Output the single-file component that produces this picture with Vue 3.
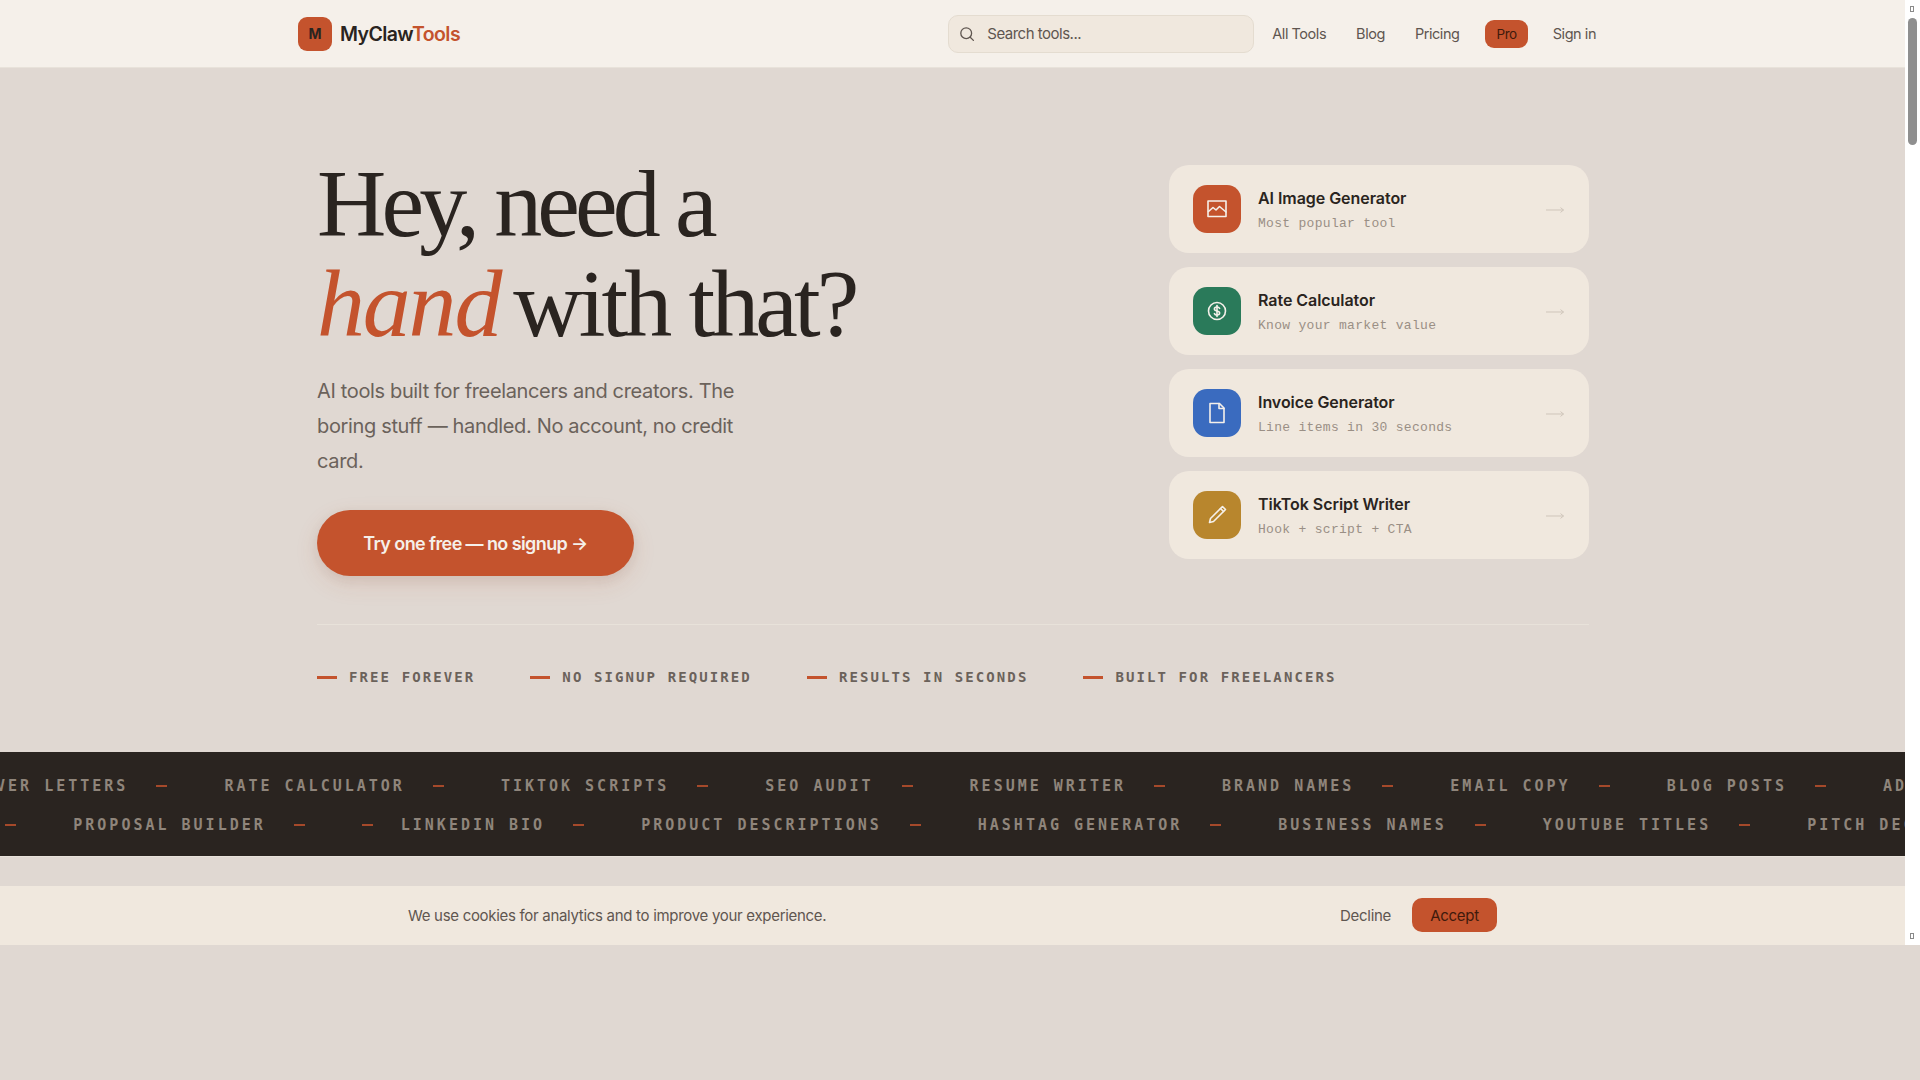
<template>
  <div class="page">
    <div class="viewport">
      <div class="content">
        <header class="topbar">
          <a class="logo">
            <span class="logo-mark">M</span>
            <span class="logo-text">MyClaw<em>Tools</em></span>
          </a>
          <div class="search">
            <svg width="16" height="16" viewBox="0 0 16 16" fill="none" stroke="#5f5650" stroke-width="1.3" stroke-linecap="round">
              <circle cx="7.2" cy="7.2" r="5.4" />
              <path d="M11.2 11.2 14.4 14.4" />
            </svg>
            <span>Search tools...</span>
          </div>
          <nav class="nav">
            <a>All Tools</a>
            <a>Blog</a>
            <a>Pricing</a>
            <a class="pro">Pro</a>
            <a>Sign in</a>
          </nav>
        </header>

        <main class="main">
          <section class="hero">
            <div class="hero-left">
              <h1>Hey, need a<br /><em>hand</em> <span>with that?</span></h1>
              <p>AI tools built for freelancers and creators. The boring stuff — handled. No account, no credit card.</p>
              <button class="cta">Try one free — no signup →</button>
            </div>
            <div class="tool-list">
              <div v-for="tool in tools" :key="tool.name" class="tool-card">
                <span class="tool-icon" :style="{ background: tool.color }">
                  <svg width="24" height="24" viewBox="0 0 24 24" fill="none" stroke="#f5f0ea" stroke-width="1.6" stroke-linecap="round" stroke-linejoin="round">
                    <path v-for="d in tool.paths" :key="d" :d="d" />
                  </svg>
                </span>
                <span class="tool-text">
                  <span class="tool-name">{{ tool.name }}</span>
                  <span class="tool-sub">{{ tool.sub }}</span>
                </span>
                <svg class="tool-arrow" width="20" height="10" viewBox="0 0 20 10" fill="none" stroke="#cfc5ba" stroke-width="1">
                  <path d="M1 5H18.5M15.5 2.6 18.5 5 15.5 7.4" />
                </svg>
              </div>
            </div>
          </section>

          <div class="perks">
            <span v-for="perk in perks" :key="perk" class="perk"><i></i>{{ perk }}</span>
          </div>
        </main>

        <section class="ticker">
          <div class="ticker-row row-a">
            <span v-for="(item, i) in rowA" :key="i" class="ticker-item">
              <span>{{ item }}</span><i></i>
            </span>
          </div>
          <div class="ticker-row row-b">
            <span v-for="(item, i) in rowB" :key="i" class="ticker-item" :class="{ bare: !item }">
              <span v-if="item">{{ item }}</span><i></i>
            </span>
          </div>
        </section>

        <div class="cookie">
          <span class="cookie-text">We use cookies for analytics and to improve your experience.</span>
          <div class="cookie-actions">
            <a>Decline</a>
            <button>Accept</button>
          </div>
        </div>
      </div>

      <!-- scrollbar of the captured window -->
      <div class="scrollbar">
        <span class="sb-end"></span>
        <span class="sb-thumb"></span>
        <span class="sb-end bottom"></span>
      </div>
    </div>
  </div>
</template>

<script setup>
const tools = [
  {
    name: 'AI Image Generator',
    sub: 'Most popular tool',
    color: '#c4532d',
    paths: ['M3 4h18v15.5H3z', 'M3.5 14.5 8 10.5l3 2.5 3.5-3.5 6.5 5.5']
  },
  {
    name: 'Rate Calculator',
    sub: 'Know your market value',
    color: '#2a7a5a',
    paths: ['M12 3.5a8.5 8.5 0 1 0 0 17 8.5 8.5 0 0 0 0-17z', 'M14.6 9.4c-.5-1-1.5-1.4-2.6-1.4-1.5 0-2.6.8-2.6 2s1.1 1.7 2.6 2 2.6.8 2.6 2-1.1 2-2.6 2c-1.1 0-2.1-.4-2.6-1.4', 'M12 6.5v11']
  },
  {
    name: 'Invoice Generator',
    sub: 'Line items in 30 seconds',
    color: '#3a6bbf',
    paths: ['M5 2.5h9.5L19 7v14.5H5z', 'M14 2.5V7.5h5']
  },
  {
    name: 'TikTok Script Writer',
    sub: 'Hook + script + CTA',
    color: '#b8862d',
    paths: ['M17.5 3.5l3 3L8.5 18.5 4.5 19.5l1-4z', 'M15.5 5.5l3 3']
  }
]

const perks = ['FREE FOREVER', 'NO SIGNUP REQUIRED', 'RESULTS IN SECONDS', 'BUILT FOR FREELANCERS']

const rowA = ['COVER LETTERS', 'RATE CALCULATOR', 'TIKTOK SCRIPTS', 'SEO AUDIT', 'RESUME WRITER', 'BRAND NAMES', 'EMAIL COPY', 'BLOG POSTS', 'AD COPY']
const rowB = ['CONTRACTS', 'PROPOSAL BUILDER', '', 'LINKEDIN BIO', 'PRODUCT DESCRIPTIONS', 'HASHTAG GENERATOR', 'BUSINESS NAMES', 'YOUTUBE TITLES', 'PITCH DECKS']
</script>

<style>
html,
body {
  margin: 0;
  background: #e0d8d2;
}
</style>

<style scoped>
.page {
  width: 1920px;
  height: 1080px;
  overflow: hidden;
  background: #e0d8d2;
  color: #2a2420;
  font-family: Inter, "Noto Sans", sans-serif;
}

.viewport {
  display: flex;
  height: 945px;
}

.content {
  position: relative;
  flex: 1;
  min-width: 0;
  overflow: hidden;
}

.topbar {
  display: flex;
  align-items: center;
  height: 68px;
  box-sizing: border-box;
  padding: 0 309px 0 298px;
  background: #f5f0ea;
  border-bottom: 1px solid #e8e2da;
}

.logo {
  display: flex;
  align-items: center;
  gap: 8px;
}

.logo-mark {
  display: flex;
  align-items: center;
  justify-content: center;
  width: 34px;
  height: 34px;
  border-radius: 9px;
  background: #c4532d;
  color: #2a2420;
  font-size: 14px;
  font-weight: 700;
}

.logo-text {
  font-size: 19.5px;
  font-weight: 600;
  letter-spacing: -0.6px;
}

.logo-text em {
  font-style: normal;
  color: #c4532d;
}

.search {
  display: flex;
  align-items: center;
  gap: 12px;
  width: 306px;
  height: 38px;
  box-sizing: border-box;
  margin-left: auto;
  padding-left: 10px;
  border: 1px solid #e4dcd0;
  border-radius: 10px;
  background: #f0e8de;
  color: #5f5650;
  font-size: 15px;
  letter-spacing: -0.5px;
}

.nav {
  display: flex;
  align-items: center;
  gap: 30px;
  margin-left: 18px;
  color: #5f5650;
  font-size: 14.5px;
  letter-spacing: -0.45px;
}

.nav .pro {
  padding: 6px 11px;
  margin: 0 -5px 0 -4px;
  border-radius: 9px;
  background: #c4532d;
  color: #3f1a0c;
  font-size: 13.5px;
}

.main {
  padding: 0 316px 0 317px;
}

.hero {
  display: flex;
  justify-content: space-between;
  padding-top: 86px;
}

h1 {
  margin: 0;
  font-family: "Liberation Serif", serif;
  font-size: 96px;
  font-weight: 400;
  line-height: 100px;
  letter-spacing: -4.9px;
  color: #2a2420;
}

h1 em {
  margin-right: -6px;
  letter-spacing: -2.2px;
  color: #c4532d;
}

h1 span {
  letter-spacing: -3.9px;
}

.hero-left p {
  width: 440px;
  margin: 20px 0 0;
  font-size: 20px;
  line-height: 35px;
  letter-spacing: -0.35px;
  color: #6b625b;
}

.cta {
  display: block;
  width: 317px;
  height: 66px;
  margin-top: 31px;
  border: 0;
  border-radius: 33px;
  background: #c4532d;
  color: #f5f0ea;
  font-family: inherit;
  font-size: 18px;
  font-weight: 600;
  letter-spacing: -0.6px;
  box-shadow: 0 8px 24px rgba(196, 83, 45, 0.12), 0 4px 12px rgba(42, 36, 32, 0.08);
}

.tool-list {
  display: flex;
  flex-direction: column;
  gap: 14px;
  width: 420px;
  margin-top: 11px;
}

.tool-card {
  display: flex;
  align-items: center;
  height: 88px;
  box-sizing: border-box;
  padding: 0 24px;
  border-radius: 20px;
  background: #f0e8de;
}

.tool-icon {
  display: flex;
  align-items: center;
  justify-content: center;
  flex-shrink: 0;
  width: 48px;
  height: 48px;
  border-radius: 14px;
}

.tool-text {
  display: flex;
  flex-direction: column;
  gap: 8px;
  margin-left: 17px;
}

.tool-name {
  font-size: 16px;
  font-weight: 600;
  letter-spacing: -0.05px;
  color: #2a2420;
}

.tool-sub {
  font-family: "Liberation Mono", monospace;
  font-size: 13px;
  letter-spacing: 0.3px;
  color: #9a8f85;
}

.tool-arrow {
  margin-left: auto;
  position: relative;
  top: 1px;
}

.perks {
  display: flex;
  gap: 55px;
  margin-top: 48px;
  padding-top: 42px;
  border-top: 1px solid #e8e2da;
}

.perk {
  display: flex;
  align-items: center;
  gap: 12px;
  font-family: "DejaVu Sans Mono", monospace;
  font-size: 14px;
  font-weight: 700;
  letter-spacing: 2.1px;
  line-height: 20px;
  color: #6b625b;
}

.perk i {
  width: 20px;
  height: 3px;
  background: #c4532d;
}

.ticker {
  display: flex;
  flex-direction: column;
  gap: 19px;
  height: 105px;
  box-sizing: border-box;
  margin-top: 65px;
  padding-top: 24px;
  background: #2a2420;
  border-bottom: 1px solid #e8e2da;
  overflow: hidden;
  font-family: "DejaVu Sans Mono", monospace;
  font-size: 15px;
  font-weight: 700;
  letter-spacing: 3px;
  line-height: 20px;
  color: #8f857b;
  white-space: nowrap;
}

.ticker-row {
  display: flex;
  gap: 57px;
}

.row-a {
  margin-left: -28px;
}

.row-b {
  margin-left: -131px;
}

.ticker-item {
  display: flex;
  align-items: center;
  gap: 28px;
  flex-shrink: 0;
}

.ticker-item.bare {
  margin-right: -29px;
}

.ticker-item i {
  width: 11px;
  height: 2px;
  background: #c4532d;
  opacity: 0.8;
}

.cookie {
  position: absolute;
  left: 0;
  right: 0;
  bottom: 0;
  display: flex;
  align-items: center;
  justify-content: space-between;
  height: 59px;
  box-sizing: border-box;
  padding: 0 408px 1px;
  background: #f0e8de;
  font-size: 15px;
  letter-spacing: -0.3px;
  color: #5f5650;
}

.cookie-actions {
  display: flex;
  align-items: center;
  gap: 21px;
}

.cookie-actions a {
  color: #5f5650;
}

.cookie-actions button {
  width: 85px;
  height: 34px;
  border: 0;
  border-radius: 10px;
  background: #c4532d;
  color: #3f1a0c;
  font-family: inherit;
  font-size: 15px;
  letter-spacing: -0.3px;
}

.scrollbar {
  position: relative;
  width: 15px;
  background: #fff;
}

.sb-end {
  position: absolute;
  top: 6px;
  left: 5px;
  width: 4px;
  height: 6px;
  box-sizing: border-box;
  border: 1px solid #8a8a8a;
}

.sb-end.bottom {
  top: auto;
  bottom: 6px;
}

.sb-thumb {
  position: absolute;
  top: 18px;
  left: 3px;
  width: 9px;
  height: 127px;
  border-radius: 5px;
  background: #8f8f8f;
}
</style>
